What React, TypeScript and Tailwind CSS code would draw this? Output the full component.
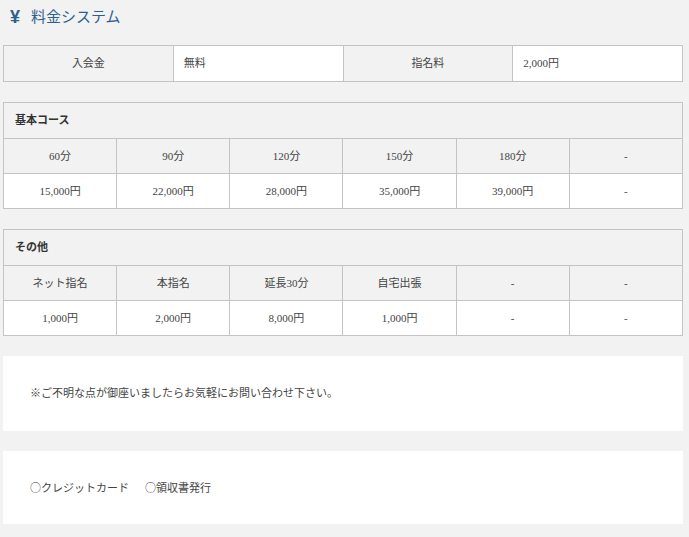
import React from "react";

const font = { fontFamily: '"Liberation Serif", "Noto Sans CJK JP", serif' };

function Cell({ children, head = false, align = "center", h = "h-[35px]" }: { children: React.ReactNode; head?: boolean; align?: "center" | "left"; h?: string }) {
  return (
    <td
      className={`${h} border border-[#c4c4c4] px-[10px] text-[11px] text-[#444] ${head ? "bg-[#f2f2f2]" : "bg-white"} ${align === "left" ? "text-left" : "text-center"}`}
    >
      {children}
    </td>
  );
}

function PriceTable({ title, heads, vals }: { title: string; heads: string[]; vals: string[] }) {
  return (
    <table className="w-[680px] table-fixed border-collapse">
      <tbody>
        <tr>
          <td colSpan={6} className="h-[36px] border border-[#c4c4c4] bg-[#f2f2f2] px-[11px] text-left text-[11px] font-bold text-[#333]">
            {title}
          </td>
        </tr>
        <tr>
          {heads.map((h, i) => (
            <Cell key={i} head>
              {h}
            </Cell>
          ))}
        </tr>
        <tr>
          {vals.map((v, i) => (
            <Cell key={i}>{v}</Cell>
          ))}
        </tr>
      </tbody>
    </table>
  );
}

const circle = { fontFamily: '"Noto Sans CJK JP", sans-serif' };

export default function App() {
  return (
    <div className="h-[537px] w-[689px] overflow-hidden bg-[#f2f2f2]" style={font}>
      <div className="flex h-[33px] items-center gap-[11px] pl-[10px] pt-[1px] text-[#2e5f8c]">
        <span className="text-[18px] font-bold" style={{ fontFamily: '"Liberation Sans", sans-serif' }}>¥</span>
        <span className="text-[15px]">料金システム</span>
      </div>
      <div className="flex flex-col pl-[3px] pt-[12px]">
        <table className="w-[680px] table-fixed border-collapse">
          <tbody>
            <tr>
              <Cell head h="h-[36px]">入会金</Cell>
              <Cell align="left" h="h-[36px]">無料</Cell>
              <Cell head h="h-[36px]">指名料</Cell>
              <Cell align="left" h="h-[36px]">2,000円</Cell>
            </tr>
          </tbody>
        </table>
        <div className="h-[20px]" />
        <PriceTable
          title="基本コース"
          heads={["60分", "90分", "120分", "150分", "180分", "-"]}
          vals={["15,000円", "22,000円", "28,000円", "35,000円", "39,000円", "-"]}
        />
        <div className="h-[20px]" />
        <PriceTable
          title="その他"
          heads={["ネット指名", "本指名", "延長30分", "自宅出張", "-", "-"]}
          vals={["1,000円", "2,000円", "8,000円", "1,000円", "-", "-"]}
        />
        <div className="h-[20px]" />
        <div className="flex h-[75px] w-[680px] items-center bg-white pl-[27px] text-[11px] text-[#444]">
          ※ご不明な点が御座いましたらお気軽にお問い合わせ下さい。
        </div>
        <div className="h-[20px]" />
        <div className="flex h-[73px] w-[680px] items-center gap-[16px] bg-white pl-[27px] text-[11px] text-[#444]">
          <span>
            <span style={circle}>○</span>クレジットカード
          </span>
          <span>
            <span style={circle}>○</span>領収書発行
          </span>
        </div>
      </div>
    </div>
  );
}
